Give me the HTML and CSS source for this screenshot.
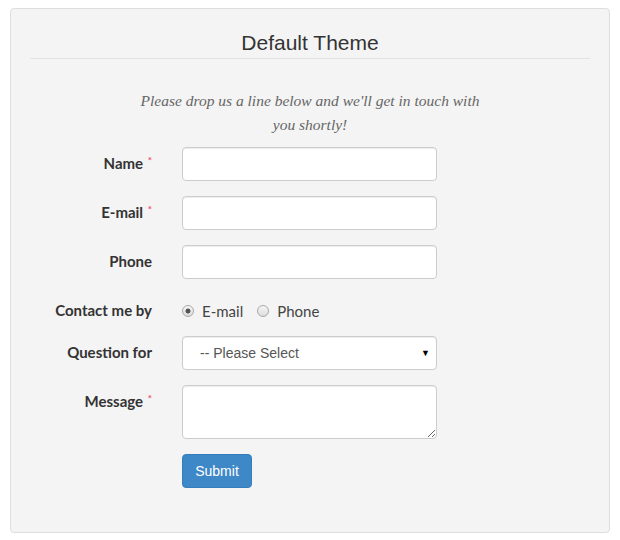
FILE: index.html
```html
<!DOCTYPE html>
<html lang="en">
<head>
<meta charset="utf-8">
<title>Default Theme</title>
<link rel="stylesheet" href="styles.css">
</head>
<body>
<div class="panel">
  <h2 class="title">Default Theme</h2>
  <p class="intro">Please drop us a line below and we'll get in touch with you shortly!</p>
  <form class="form">
    <div class="row">
      <label class="lbl">Name <span class="req">*</span></label>
      <input class="ctl" type="text">
    </div>
    <div class="row">
      <label class="lbl">E-mail <span class="req">*</span></label>
      <input class="ctl" type="text">
    </div>
    <div class="row">
      <label class="lbl">Phone</label>
      <input class="ctl" type="text">
    </div>
    <div class="row">
      <span class="lbl">Contact me by</span>
      <div class="radios">
        <label class="radio"><input type="radio" name="contact" checked><span>E-mail</span></label>
        <label class="radio"><input type="radio" name="contact"><span>Phone</span></label>
      </div>
    </div>
    <div class="row">
      <label class="lbl">Question for</label>
      <div class="select-wrap">
        <select class="ctl sel"><option>-- Please Select</option></select>
        <span class="caret">&#9660;</span>
      </div>
    </div>
    <div class="row">
      <label class="lbl">Message <span class="req">*</span></label>
      <textarea class="ctl area"></textarea>
    </div>
    <div class="row last">
      <span></span>
      <div><button type="button" class="btn">Submit</button></div>
    </div>
  </form>
</div>
</body>
</html>
```

FILE: styles.css
```css
html, body {
  margin: 0;
  padding: 0;
  background: #ffffff;
}

body {
  font-family: "Liberation Sans", Arial, sans-serif;
  font-size: 14px;
  color: #333;
}

.panel {
  box-sizing: border-box;
  width: 600px;
  margin: 8px 0 0 10px;
  padding: 22px 19px 44px;
  background: #f4f4f4;
  border: 1px solid #dedede;
  border-radius: 4px;
}

.title {
  margin: 0;
  padding-bottom: 3px;
  font-family: "Liberation Sans", Arial, sans-serif;
  font-weight: normal;
  font-size: 21px;
  line-height: 24px;
  color: #333;
  text-align: center;
  border-bottom: 1px solid #e2e2e2;
}

.intro {
  width: 350px;
  margin: 30px auto 10px;
  font-family: "Liberation Serif", "DejaVu Serif", serif;
  font-style: italic;
  font-size: 15.5px;
  line-height: 24px;
  color: #666;
  text-align: center;
}

.row {
  display: grid;
  grid-template-columns: 122px 255px;
  column-gap: 30px;
  margin-bottom: 15px;
}

.row.last {
  margin-bottom: 0;
}

.lbl {
  padding-top: 6px;
  line-height: 20px;
  font-family: Lato, "Liberation Sans", sans-serif;
  font-weight: bold;
  font-size: 15px;
  color: #333;
  text-align: right;
}

.req {
  color: #f0506e;
  font-size: 10px;
  vertical-align: top;
  line-height: 14px;
  margin-left: 1px;
}

.ctl {
  box-sizing: border-box;
  display: block;
  width: 255px;
  height: 34px;
  margin: 0;
  padding: 6px 12px;
  font-family: "Liberation Sans", Arial, sans-serif;
  font-size: 14px;
  color: #555;
  background: #fff;
  border: 1px solid #ccc;
  border-radius: 4px;
  box-shadow: inset 0 1px 1px rgba(0, 0, 0, 0.075);
  outline: none;
}

.area {
  height: 54px;
  resize: vertical;
}

.radios {
  display: flex;
  align-items: center;
  gap: 14px;
  padding-top: 7px;
  box-sizing: border-box;
  height: 27px;
}

.radio {
  display: flex;
  align-items: center;
  line-height: 20px;
  font-family: Lato, "Liberation Sans", sans-serif;
  font-size: 15px;
  color: #444;
}

.radio input {
  appearance: none;
  -webkit-appearance: none;
  box-sizing: border-box;
  width: 12px;
  height: 12px;
  margin: 0 8px 0 0;
  border: 1px solid #a9a9a9;
  border-radius: 50%;
  background: linear-gradient(#f6f6f6, #dcdcdc);
}

.radio input:checked {
  background: radial-gradient(circle, #555 0, #555 2.2px, transparent 2.8px), linear-gradient(#f6f6f6, #dcdcdc);
}

.select-wrap {
  position: relative;
  width: 255px;
}

.sel {
  appearance: none;
  -webkit-appearance: none;
  padding-left: 17px;
}

.caret {
  position: absolute;
  right: 7px;
  top: 10px;
  font-size: 9px;
  line-height: 14px;
  color: #000;
  pointer-events: none;
}

.btn {
  box-sizing: border-box;
  width: 70px;
  height: 34px;
  padding: 6px 12px;
  font-family: "Liberation Sans", Arial, sans-serif;
  font-size: 14px;
  color: #fff;
  background: #3f88c8;
  border: 1px solid #357ebd;
  border-radius: 4px;
}
```
